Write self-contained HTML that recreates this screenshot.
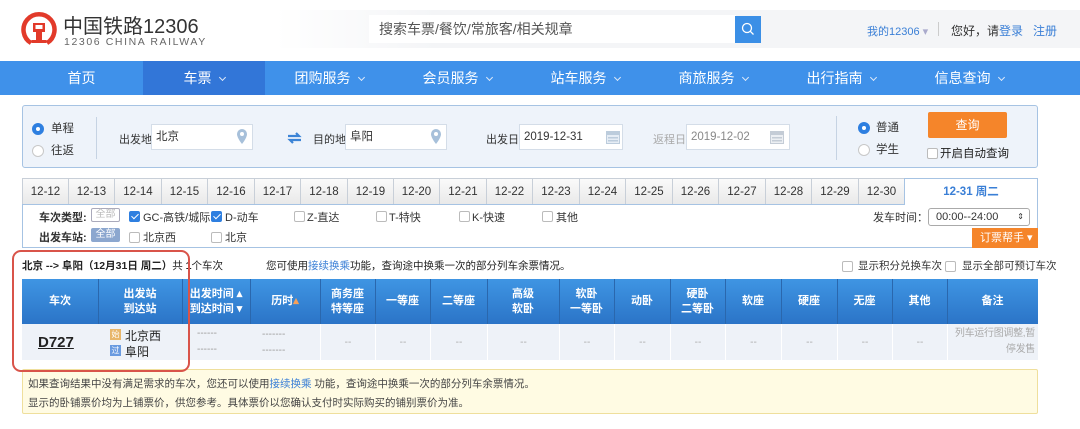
<!DOCTYPE html>
<html><head><meta charset="utf-8">
<style>
*{margin:0;padding:0;box-sizing:border-box}
body{width:1080px;height:429px;background:#fff;font-family:"Liberation Sans","Noto Sans CJK SC",sans-serif;font-size:11px;color:#333;position:relative;overflow:hidden}
.a{position:absolute;white-space:nowrap}
.nav{left:0;top:61px;width:1080px;height:34px;background:#3f91ea}
.nav div{position:absolute;top:0;height:34px;line-height:34px;color:#fff;font-size:14px;text-align:center}
.chev{display:inline-block;width:5px;height:5px;border-right:1px solid #dfe9f8;border-bottom:1px solid #dfe9f8;transform:rotate(45deg);margin-left:8px;position:relative;top:-3px}
.panel{left:22px;top:105px;width:1016px;height:63px;background:#eef3fa;border:1px solid #a6c3e3;border-radius:3px}
.inp{position:absolute;background:#fff;border:1px solid #d4dde8;height:26px;line-height:24px;padding-left:4px;font-size:11.5px}
.radio{position:absolute;width:12px;height:12px;border-radius:50%;border:1px solid #c8c8c8;background:#fff}
.radio.on{background:#2e7fe0;border-color:#2e7fe0}
.radio.on:after{content:"";position:absolute;left:3px;top:3px;width:4px;height:4px;border-radius:50%;background:#fff}
.tabs{left:22px;top:178px;width:1016px;height:27px}
.tab{position:absolute;top:0;height:27px;line-height:26px;text-align:center;background:linear-gradient(#fafafa,#e9e9e9);border:1px solid #c8cfd8;border-right:none;font-size:11.5px;color:#333}
.cb{position:absolute;width:11px;height:11px;border:1px solid #bbb;border-radius:2px;background:#fff}
.cb.on{background:#2e7fe0;border-color:#2e7fe0}
.cb.on:after{content:"";position:absolute;left:3px;top:0px;width:3px;height:6px;border-right:1.5px solid #fff;border-bottom:1.5px solid #fff;transform:rotate(45deg)}
.th{left:22px;top:279px;width:1016px;height:45px;background:linear-gradient(#3f95e3,#2b74c7)}
.th div{position:absolute;top:0;height:45px;display:flex;align-items:center;justify-content:center;text-align:center;color:#fff;font-weight:bold;font-size:11px;line-height:15px}
.sep{position:absolute;top:12px;width:1px;height:22px;background:#2a67ad}
.row{left:22px;top:324px;width:1016px;height:36px;background:#eef2f8}
.row .c{position:absolute;top:0;height:36px;display:flex;align-items:center;justify-content:center;color:#aaa;font-size:10px;border-left:1px solid #fff}
</style></head><body>
<svg class="a" style="left:21px;top:9px" width="36" height="38" viewBox="0 0 36 38">
<path d="M10 34 A15.5 15.5 0 1 1 26 34" fill="none" stroke="#e23a2a" stroke-width="4.5"/>
<path d="M10.5 34 H25.5 V31 H21 V23 H24 V14 H12 V23 H15 V31 H10.5Z" fill="#e23a2a"/>
<rect x="14.5" y="16" width="7" height="4" fill="#fff"/>
</svg>
<div class="a" style="left:63px;top:10px;font-size:20px;color:#333">中国铁路12306</div>
<div class="a" style="left:64px;top:36px;font-size:10.5px;color:#666;letter-spacing:1.6px">12306 CHINA RAILWAY</div>
<div class="a" style="left:275px;top:10px;width:805px;height:38px;background:linear-gradient(90deg,#fff,#f4f5f7 20%,#f4f5f7)"></div>
<div class="a" style="left:369px;top:15px;width:367px;height:28px;background:#fff;line-height:28px;padding-left:10px;font-size:14px;color:#555">搜索车票/餐饮/常旅客/相关规章</div>
<div class="a" style="left:735px;top:16px;width:26px;height:27px;background:#3b8fe6"></div>
<svg class="a" style="left:741px;top:22px" width="14" height="14" viewBox="0 0 14 14"><circle cx="6" cy="6" r="4.5" fill="none" stroke="#fff" stroke-width="1.3"/><path d="M9.3 9.3 L12.5 12.5" stroke="#fff" stroke-width="1.3"/></svg>
<div class="a" style="left:867px;top:23px;font-size:11px;color:#3a7fd6">我的12306 <span style="color:#aac">▾</span></div>
<div class="a" style="left:938px;top:22px;width:1px;height:14px;background:#ccc"></div>
<div class="a" style="left:951px;top:22px;font-size:12px;color:#333">您好，请<span style="color:#3a7fd6">登录</span>&nbsp;&nbsp;&nbsp;<span style="color:#3a7fd6">注册</span></div>
<div class="a nav">
<div style="left:20px;width:123px">首页</div>
<div style="left:143px;width:122px;background:#3276d8">车票<span class="chev"></span></div>
<div style="left:265px;width:128px">团购服务<span class="chev"></span></div>
<div style="left:393px;width:128px">会员服务<span class="chev"></span></div>
<div style="left:521px;width:128px">站车服务<span class="chev"></span></div>
<div style="left:649px;width:128px">商旅服务<span class="chev"></span></div>
<div style="left:777px;width:128px">出行指南<span class="chev"></span></div>
<div style="left:905px;width:128px">信息查询<span class="chev"></span></div>
</div>
<div class="a panel">
<div class="radio on" style="left:9px;top:17px"></div><div class="a" style="left:28px;top:14px;font-size:11.5px">单程</div>
<div class="radio" style="left:9px;top:39px"></div><div class="a" style="left:28px;top:36px;font-size:11.5px">往返</div>
<div class="a" style="left:73px;top:11px;width:1px;height:42px;background:#c6d3e3"></div>
<div class="a" style="left:96px;top:25px">出发地</div>
<div class="inp" style="left:128px;top:18px;width:102px">北京</div>
<svg class="a" style="left:213px;top:22px" width="12" height="17" viewBox="0 0 12 17"><path d="M6 1a5 5 0 0 1 5 5c0 4-5 10-5 10S1 10 1 6a5 5 0 0 1 5-5z" fill="#a7c0da"/><circle cx="6" cy="6" r="2" fill="#fff"/></svg>
<svg class="a" style="left:264px;top:26px" width="15" height="12" viewBox="0 0 15 12"><path d="M1 4h11l-3-3M14 8H3l3 3" fill="none" stroke="#3c84d6" stroke-width="2.2"/></svg>
<div class="a" style="left:290px;top:25px">目的地</div>
<div class="inp" style="left:322px;top:18px;width:102px">阜阳</div>
<svg class="a" style="left:407px;top:22px" width="12" height="17" viewBox="0 0 12 17"><path d="M6 1a5 5 0 0 1 5 5c0 4-5 10-5 10S1 10 1 6a5 5 0 0 1 5-5z" fill="#a7c0da"/><circle cx="6" cy="6" r="2" fill="#fff"/></svg>
<div class="a" style="left:463px;top:25px">出发日</div>
<div class="inp" style="left:496px;top:18px;width:104px">2019-12-31</div>
<svg class="a" style="left:582px;top:23px" width="16" height="16" viewBox="0 0 16 16"><rect x="1" y="2" width="14" height="13" fill="#bcccdc"/><rect x="2" y="6" width="12" height="8" fill="#e6edf5"/><rect x="3" y="8" width="10" height="1.5" fill="#bcccdc"/><rect x="3" y="11" width="10" height="1.5" fill="#bcccdc"/></svg>
<div class="a" style="left:630px;top:25px;color:#aaa">返程日</div>
<div class="inp" style="left:663px;top:18px;width:104px;color:#888">2019-12-02</div>
<svg class="a" style="left:746px;top:23px" width="16" height="16" viewBox="0 0 16 16"><rect x="1" y="2" width="14" height="13" fill="#c4ccd6"/><rect x="2" y="6" width="12" height="8" fill="#eceff3"/><rect x="3" y="8" width="10" height="1.5" fill="#c4ccd6"/><rect x="3" y="11" width="10" height="1.5" fill="#c4ccd6"/></svg>
<div class="a" style="left:813px;top:10px;width:1px;height:44px;background:#c6d3e3"></div>
<div class="radio on" style="left:835px;top:16px"></div><div class="a" style="left:853px;top:13px;font-size:11.5px">普通</div>
<div class="radio" style="left:835px;top:38px"></div><div class="a" style="left:853px;top:35px;font-size:11.5px">学生</div>
<div class="a" style="left:905px;top:6px;width:79px;height:26px;background:#f5852a;border-radius:2px;color:#fff;text-align:center;line-height:26px;font-size:12px">查询</div>
<div class="cb" style="left:904px;top:42px"></div><div class="a" style="left:917px;top:39px;color:#222;font-size:11.5px">开启自动查询</div>
</div>
<div class="a tabs">
<div class="tab" style="left:0;width:46px">12-12</div><div class="tab" style="left:46px;width:46px">12-13</div><div class="tab" style="left:92px;width:47px">12-14</div><div class="tab" style="left:139px;width:46px">12-15</div><div class="tab" style="left:185px;width:47px">12-16</div><div class="tab" style="left:232px;width:46px">12-17</div><div class="tab" style="left:278px;width:47px">12-18</div><div class="tab" style="left:325px;width:46px">12-19</div><div class="tab" style="left:371px;width:46px">12-20</div><div class="tab" style="left:417px;width:47px">12-21</div><div class="tab" style="left:464px;width:46px">12-22</div><div class="tab" style="left:510px;width:47px">12-23</div><div class="tab" style="left:557px;width:46px">12-24</div><div class="tab" style="left:603px;width:47px">12-25</div><div class="tab" style="left:650px;width:46px">12-26</div><div class="tab" style="left:696px;width:47px">12-27</div><div class="tab" style="left:743px;width:46px">12-28</div><div class="tab" style="left:789px;width:47px">12-29</div><div class="tab" style="left:836px;width:46px">12-30</div>
<div class="tab" style="left:882px;width:134px;background:#fff;border-right:1px solid #a6c3e3;border-color:#a6c3e3;color:#3a7fd6;font-weight:bold;border-bottom:none">12-31 周二</div>
</div>
<div class="a" style="left:22px;top:204px;width:1016px;height:44px;border:1px solid #a6c3e3;border-top:none"></div>
<div class="a" style="left:22px;top:204px;width:882px;height:1px;background:#a6c3e3"></div>
<div class="a" style="left:39px;top:209px;font-weight:bold;font-size:11px">车次类型:</div>
<div class="a" style="left:91px;top:208px;width:29px;height:14px;border:1px solid #aab;border-radius:2px;color:#bbb;font-size:10px;text-align:center;line-height:12px">全部</div>
<div class="cb on" style="left:129px;top:211px"></div><div class="a" style="left:143px;top:209px">GC-高铁/城际</div>
<div class="cb on" style="left:211px;top:211px"></div><div class="a" style="left:225px;top:209px">D-动车</div>
<div class="cb" style="left:294px;top:211px"></div><div class="a" style="left:307px;top:209px">Z-直达</div>
<div class="cb" style="left:376px;top:211px"></div><div class="a" style="left:389px;top:209px">T-特快</div>
<div class="cb" style="left:459px;top:211px"></div><div class="a" style="left:472px;top:209px">K-快速</div>
<div class="cb" style="left:542px;top:211px"></div><div class="a" style="left:556px;top:209px">其他</div>
<div class="a" style="left:39px;top:229px;font-weight:bold;font-size:11px">出发车站:</div>
<div class="a" style="left:91px;top:228px;width:29px;height:14px;background:#8ca7cf;border-radius:2px;color:#fff;font-size:10px;text-align:center;line-height:14px">全部</div>
<div class="cb" style="left:129px;top:232px"></div><div class="a" style="left:143px;top:229px">北京西</div>
<div class="cb" style="left:211px;top:232px"></div><div class="a" style="left:225px;top:229px">北京</div>
<div class="a" style="left:873px;top:209px">发车时间：</div>
<div class="a" style="left:928px;top:208px;width:102px;height:18px;border:1px solid #aaa;border-radius:3px;font-size:11px;line-height:16px;padding-left:7px">00:00--24:00 <span style="position:absolute;right:5px;font-size:8px">⇕</span></div>
<div class="a" style="left:972px;top:228px;width:66px;height:20px;background:#f5852a;color:#fff;font-size:11px;line-height:20px;padding-left:8px">订票帮手 ▾</div>
<div class="a" style="left:22px;top:258px;font-size:10.5px;color:#222"><b>北京 --&gt; 阜阳（12月31日 周二）</b>共 <b>1</b>个车次</div>
<div class="a" style="left:266px;top:258px;font-size:10.5px;color:#222">您可使用<span style="color:#3a7fd6">接续换乘</span>功能，查询途中换乘一次的部分列车余票情况。</div>
<div class="cb" style="left:842px;top:261px"></div><div class="a" style="left:858px;top:258px;font-size:10.5px">显示积分兑换车次</div>
<div class="cb" style="left:945px;top:261px"></div><div class="a" style="left:962px;top:258px;font-size:10.5px">显示全部可预订车次</div>
<div class="a th">
<div style="left:0;width:76px">车次</div><div class="sep" style="left:76px"></div>
<div style="left:76px;width:84px">出发站<br>到达站</div><div class="sep" style="left:160px"></div>
<div style="left:160px;width:68px">出发时间 ▴<br>到达时间 ▾</div><div class="sep" style="left:228px"></div>
<div style="left:228px;width:70px">历时 <span style="color:#f5a05a">▴</span></div><div class="sep" style="left:298px"></div>
<div style="left:298px;width:55px">商务座<br>特等座</div><div class="sep" style="left:353px"></div>
<div style="left:353px;width:55px">一等座</div><div class="sep" style="left:408px"></div>
<div style="left:408px;width:57px">二等座</div><div class="sep" style="left:465px"></div>
<div style="left:465px;width:72px">高级<br>软卧</div><div class="sep" style="left:537px"></div>
<div style="left:537px;width:55px">软卧<br>一等卧</div><div class="sep" style="left:592px"></div>
<div style="left:592px;width:56px">动卧</div><div class="sep" style="left:648px"></div>
<div style="left:648px;width:55px">硬卧<br>二等卧</div><div class="sep" style="left:703px"></div>
<div style="left:703px;width:56px">软座</div><div class="sep" style="left:759px"></div>
<div style="left:759px;width:56px">硬座</div><div class="sep" style="left:815px"></div>
<div style="left:815px;width:55px">无座</div><div class="sep" style="left:870px"></div>
<div style="left:870px;width:55px">其他</div><div class="sep" style="left:925px"></div>
<div style="left:925px;width:91px">备注</div>
</div>
<div class="a row">
<div class="a" style="left:16px;top:10px;font-size:15px;font-weight:bold;color:#222;text-decoration:underline">D727</div>
<div class="a" style="left:88px;top:5px;width:11px;height:11px;background:#e8b66a;color:#fff;font-size:8px;line-height:11px;text-align:center">始</div>
<div class="a" style="left:103px;top:3px;font-size:12px;color:#222">北京西</div>
<div class="a" style="left:88px;top:21px;width:11px;height:11px;background:#6a9be0;color:#fff;font-size:8px;line-height:11px;text-align:center">过</div>
<div class="a" style="left:103px;top:19px;font-size:12px;color:#222">阜阳</div>
<div class="a" style="left:175px;top:2px;color:#999;font-size:10px;line-height:16px">------<br>------</div>
<div class="a" style="left:240px;top:3px;color:#999;font-size:10px;line-height:16px">-------<br>-------</div>
<div class="c" style="left:298px;width:55px">--</div><div class="c" style="left:353px;width:55px">--</div><div class="c" style="left:408px;width:57px">--</div><div class="c" style="left:465px;width:72px">--</div><div class="c" style="left:537px;width:55px">--</div><div class="c" style="left:592px;width:56px">--</div><div class="c" style="left:648px;width:55px">--</div><div class="c" style="left:703px;width:56px">--</div><div class="c" style="left:759px;width:56px">--</div><div class="c" style="left:815px;width:55px">--</div><div class="c" style="left:870px;width:55px">--</div>
<div class="c" style="left:925px;width:91px;font-size:10px;letter-spacing:-0.3px;line-height:16px;text-align:right;justify-content:flex-end;padding-right:3px;white-space:nowrap">列车运行图调整,暂<br>停发售</div>
</div>
<div class="a" style="left:22px;top:369px;width:1016px;height:45px;background:#fffbe3;border:1px solid #efdf9c;border-radius:2px"></div>
<div class="a" style="left:28px;top:376px;font-size:10.5px;color:#444">如果查询结果中没有满足需求的车次，您还可以使用<span style="color:#3a7fd6">接续换乘</span> 功能，查询途中换乘一次的部分列车余票情况。</div>
<div class="a" style="left:28px;top:395px;font-size:10.5px;color:#444">显示的卧铺票价均为上铺票价，供您参考。具体票价以您确认支付时实际购买的铺别票价为准。</div>
<div class="a" style="left:12px;top:250px;width:178px;height:122px;border:2.5px solid #d9544a;border-radius:9px"></div>
</body></html>
